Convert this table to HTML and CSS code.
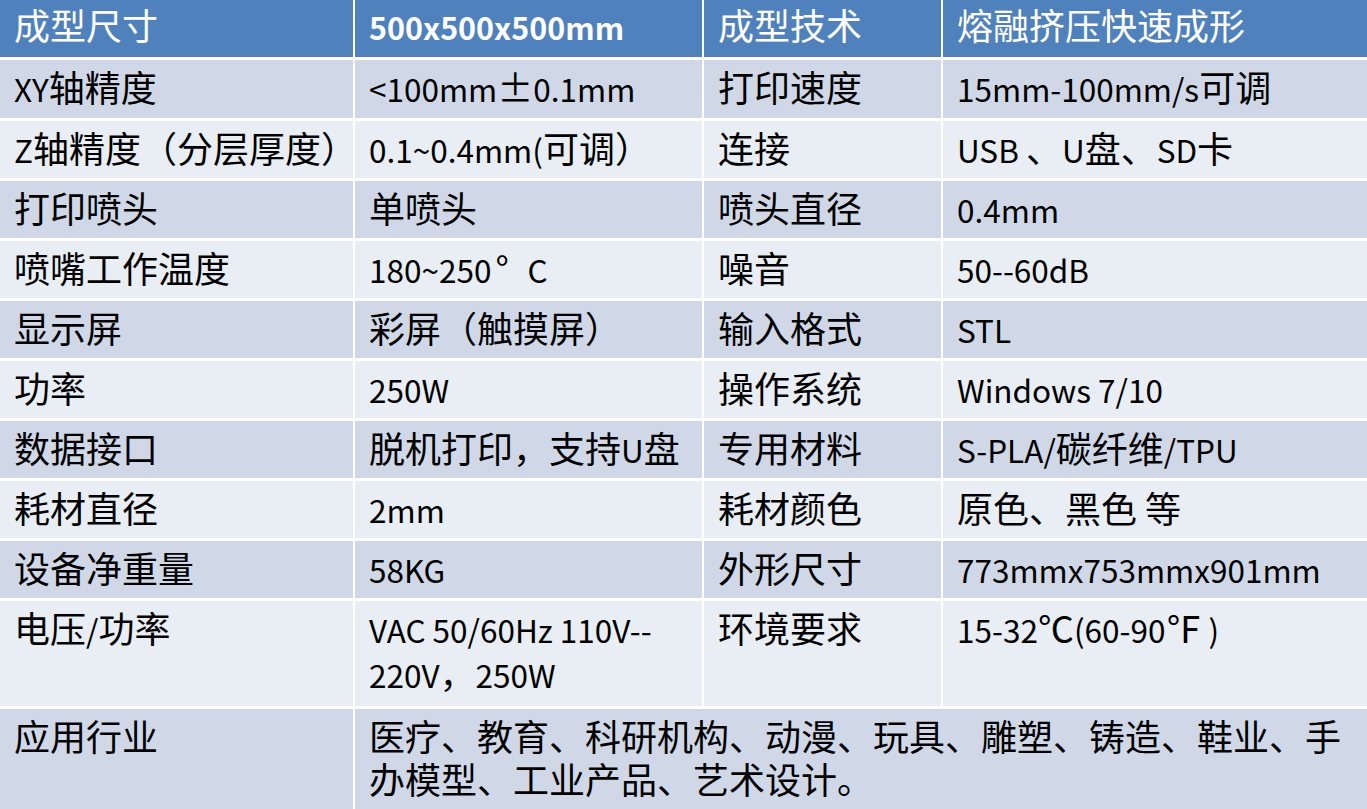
FILE: index.html
```html
<!DOCTYPE html>
<html lang="zh-CN">
<head>
<meta charset="utf-8">
<title>规格参数</title>
<link rel="stylesheet" href="styles.css">
</head>
<body>
<div class="spec">
  <div class="cell head">成型尺寸</div>
  <div class="cell head bold"><span class="en">500x500x500mm</span></div>
  <div class="cell head">成型技术</div>
  <div class="cell head">熔融挤压快速成形</div>

  <div class="cell dark"><span class="en">XY</span>轴精度</div>
  <div class="cell dark"><span class="en">&lt;100mm</span><span class="fw">±</span><span class="en">0.1mm</span></div>
  <div class="cell dark">打印速度</div>
  <div class="cell dark"><span class="en">15mm-100mm/s</span>可调</div>

  <div class="cell light"><span class="en">Z</span>轴精度（分层厚度）</div>
  <div class="cell light"><span class="en">0.1~0.4mm(</span>可调）</div>
  <div class="cell light">连接</div>
  <div class="cell light"><span class="en">USB </span>、<span class="en">U</span>盘、<span class="en">SD</span>卡</div>

  <div class="cell dark">打印喷头</div>
  <div class="cell dark">单喷头</div>
  <div class="cell dark">喷头直径</div>
  <div class="cell dark"><span class="en">0.4mm</span></div>

  <div class="cell light">喷嘴工作温度</div>
  <div class="cell light"><span class="en">180~250</span><span class="fw deg">°</span><span class="en">C</span></div>
  <div class="cell light">噪音</div>
  <div class="cell light"><span class="en">50--60dB</span></div>

  <div class="cell dark">显示屏</div>
  <div class="cell dark">彩屏（触摸屏）</div>
  <div class="cell dark">输入格式</div>
  <div class="cell dark"><span class="en">STL</span></div>

  <div class="cell light">功率</div>
  <div class="cell light"><span class="en">250W</span></div>
  <div class="cell light">操作系统</div>
  <div class="cell light"><span class="en">Windows 7/10</span></div>

  <div class="cell dark">数据接口</div>
  <div class="cell dark">脱机打印，支持<span class="en">U</span>盘</div>
  <div class="cell dark">专用材料</div>
  <div class="cell dark"><span class="en">S-PLA/</span>碳纤维<span class="en">/TPU</span></div>

  <div class="cell light">耗材直径</div>
  <div class="cell light"><span class="en">2mm</span></div>
  <div class="cell light">耗材颜色</div>
  <div class="cell light">原色、黑色 等</div>

  <div class="cell dark">设备净重量</div>
  <div class="cell dark"><span class="en">58KG</span></div>
  <div class="cell dark">外形尺寸</div>
  <div class="cell dark"><span class="en">773mmx753mmx901mm</span></div>

  <div class="cell light">电压<span class="en">/</span>功率</div>
  <div class="cell light"><span class="en">VAC 50/60Hz 110V--</span><br><span class="en">220V</span>，<span class="en">250W</span></div>
  <div class="cell light">环境要求</div>
  <div class="cell light"><span class="en">15-32</span>℃<span class="en">(60-90</span>℉<span class="en"> )</span></div>

  <div class="cell dark">应用行业</div>
  <div class="cell dark wide">医疗、教育、科研机构、动漫、玩具、雕塑、铸造、鞋业、手办模型、工业产品、艺术设计。</div>
</div>
</body>
</html>
```

FILE: styles.css
```css
html, body {
  margin: 0;
  padding: 0;
  background: #ffffff;
}

body {
  width: 1367px;
  height: 809px;
  overflow: hidden;
}

.spec {
  display: grid;
  grid-template-columns: 353px 347px 237px 424px;
  grid-template-rows: 57px 58px repeat(8, 57px) 105px 104px;
  column-gap: 2px;
  row-gap: 3px;
  background: #ffffff;
  font-family: "Noto Sans CJK SC", "Noto Sans", sans-serif;
  font-size: 36px;
  line-height: 43px;
  color: #000000;
}

.cell {
  padding: 5px 0 0 14px;
  white-space: nowrap;
}

.cell.wide {
  grid-column: 2 / 5;
  white-space: normal;
}

.en {
  font-size: 31.5px;
}

.head {
  background: #4f81bd;
  color: #ffffff;
  padding-top: 3px;
}

.bold {
  font-weight: 700;
}

.bold .en {
  font-size: 30.5px;
}

.dark {
  background: #d0d8e8;
}

.light {
  background: #e9edf4;
}

.fw {
  display: inline-block;
  width: 1em;
  text-align: center;
}

.deg {
  text-align: left;
  text-indent: 4px;
}
```
